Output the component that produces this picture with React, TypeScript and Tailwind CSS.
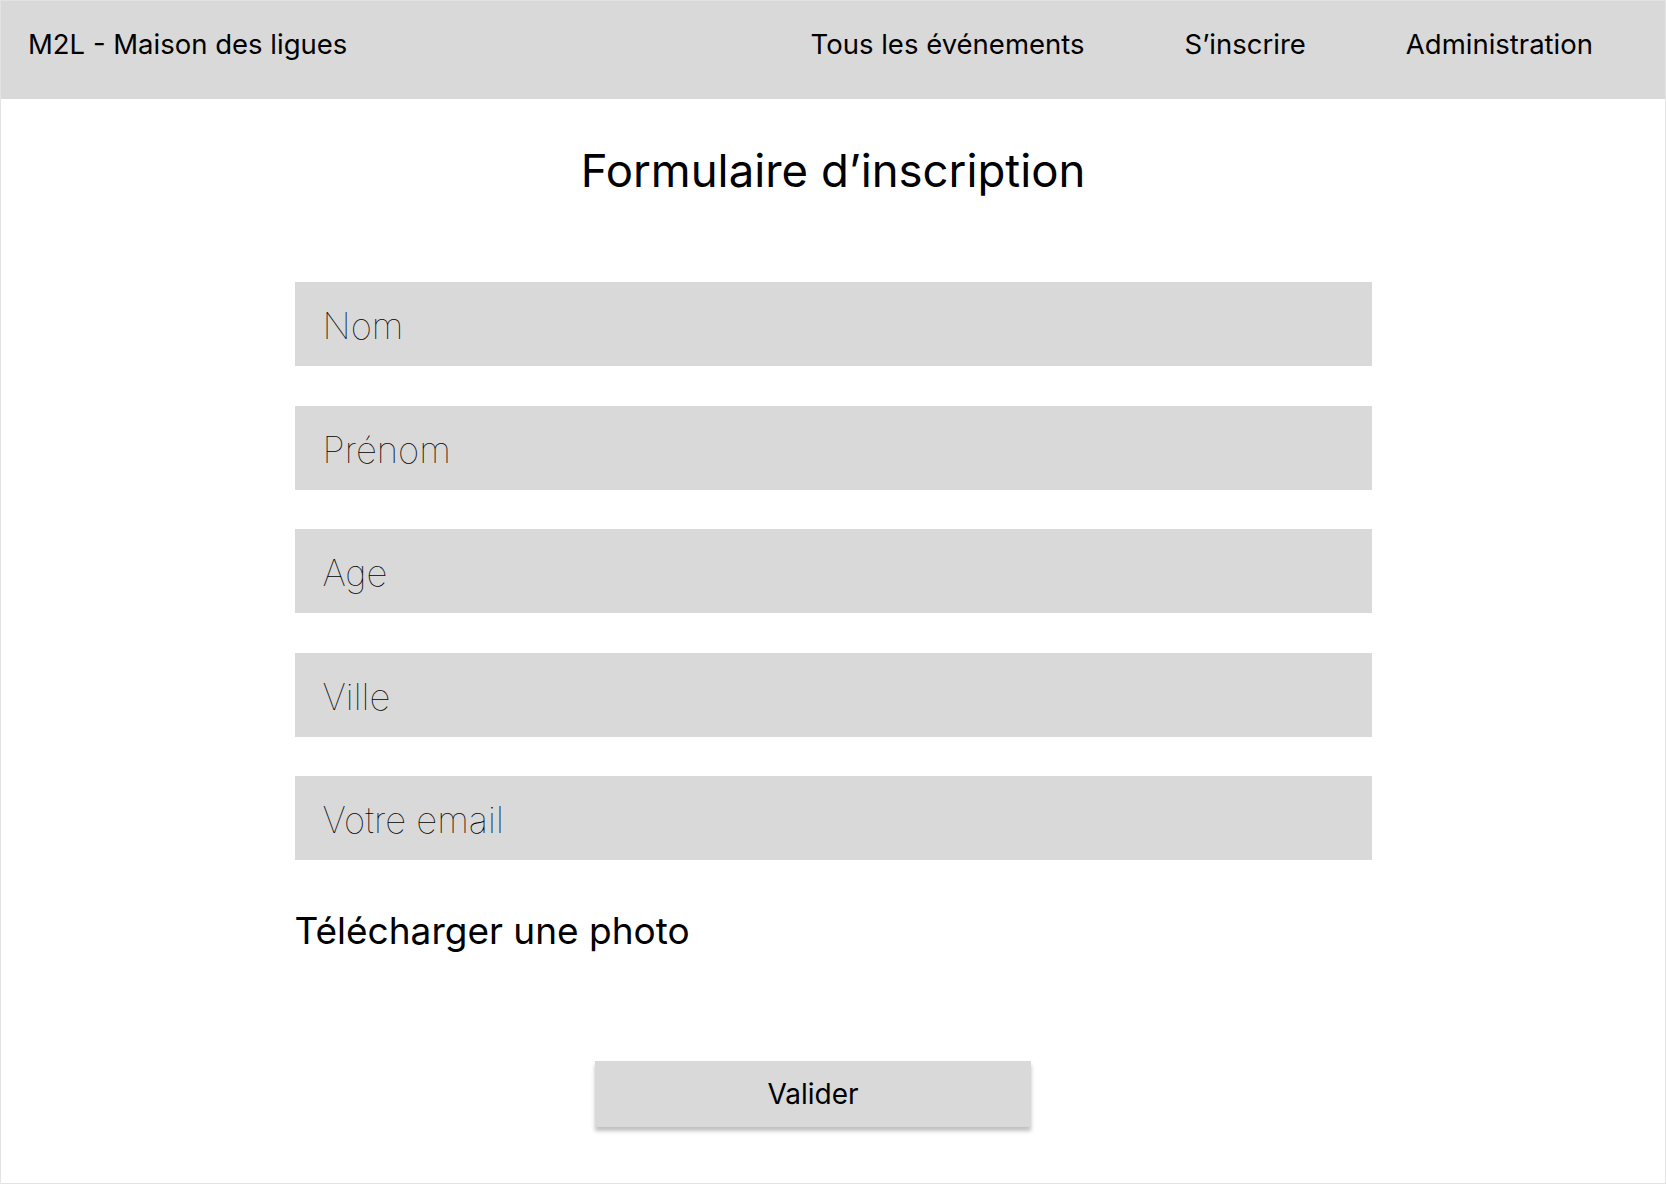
const fields = ["Nom", "Prénom", "Age", "Ville", "Votre email"];

export default function App() {
  return (
    <div
      className="w-[1666px] h-[1184px] bg-white border border-[#e3e3e3] text-black flex flex-col"
      style={{ fontFamily: "Inter, 'Noto Sans', sans-serif" }}
    >
      <header className="h-[98px] bg-[#d9d9d9] flex items-center pl-[27px] pr-[72px] pb-[10px] shrink-0">
        <div className="text-[27.5px]">M2L - Maison des ligues</div>
        <nav className="ml-auto flex items-center gap-[100px] text-[27.5px]">
          <a>Tous les événements</a>
          <a>S’inscrire</a>
          <a>Administration</a>
        </nav>
      </header>

      <main className="flex flex-col items-center">
        <h1 className="mt-[42px] text-[45.5px] leading-[60px]">Formulaire d’inscription</h1>

        <form className="w-[1077px] mt-[81px] flex flex-col gap-[39.5px]">
          {fields.map((label) => (
            <input
              key={label}
              placeholder={label}
              className="h-[84px] w-full bg-[#d9d9d9] pl-[28px] pt-[4px] text-[36.5px] font-thin placeholder:text-black outline-none"
            />
          ))}
          <div className="mt-[9px] text-[37px] leading-[44px]">Télécharger une photo</div>
        </form>

        <button className="mt-[108px] mr-[40px] w-[436px] h-[66px] bg-[#d9d9d9] text-[28px] shadow-[0_4px_4px_rgba(0,0,0,0.25)]">
          Valider
        </button>
      </main>
    </div>
  );
}
